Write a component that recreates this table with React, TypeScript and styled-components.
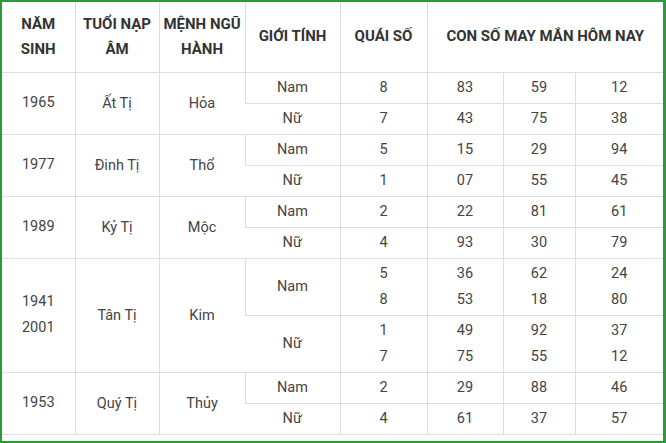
import React from "react";
import styled, { createGlobalStyle } from "styled-components";

const GlobalStyle = createGlobalStyle`
  html, body {
    margin: 0;
    padding: 0;
    background: #ffffff;
  }
  body {
    font-family: Roboto, "Noto Sans", "Liberation Sans", sans-serif;
  }
`;

type Gender = {
  label: string;
  quai: string[];
  nums: string[][];
  tall?: boolean;
};

type Row = {
  years: string[];
  tuoi: string;
  menh: string;
  genders: Gender[];
};

const rows: Row[] = [
  {
    years: ["1965"],
    tuoi: "Ất Tị",
    menh: "Hỏa",
    genders: [
      { label: "Nam", quai: ["8"], nums: [["83", "59", "12"]] },
      { label: "Nữ", quai: ["7"], nums: [["43", "75", "38"]] },
    ],
  },
  {
    years: ["1977"],
    tuoi: "Đinh Tị",
    menh: "Thổ",
    genders: [
      { label: "Nam", quai: ["5"], nums: [["15", "29", "94"]] },
      { label: "Nữ", quai: ["1"], nums: [["07", "55", "45"]] },
    ],
  },
  {
    years: ["1989"],
    tuoi: "Kỷ Tị",
    menh: "Mộc",
    genders: [
      { label: "Nam", quai: ["2"], nums: [["22", "81", "61"]] },
      { label: "Nữ", quai: ["4"], nums: [["93", "30", "79"]] },
    ],
  },
  {
    years: ["1941", "2001"],
    tuoi: "Tân Tị",
    menh: "Kim",
    genders: [
      {
        label: "Nam",
        quai: ["5", "8"],
        nums: [
          ["36", "53"],
          ["62", "18"],
          ["24", "80"],
        ],
        tall: true,
      },
      {
        label: "Nữ",
        quai: ["1", "7"],
        nums: [
          ["49", "75"],
          ["92", "55"],
          ["37", "12"],
        ],
        tall: true,
      },
    ],
  },
  {
    years: ["1953"],
    tuoi: "Quý Tị",
    menh: "Thủy",
    genders: [
      { label: "Nam", quai: ["2"], nums: [["29", "88", "46"]] },
      { label: "Nữ", quai: ["4"], nums: [["61", "37", "57"]] },
    ],
  },
];

// for the single-line rows nums is one row of three columns,
// for the tall rows it is three columns of two lines
const columnsOf = (g: Gender): string[][] =>
  g.tall ? g.nums : g.nums[0].map((n) => [n]);

const App: React.FC = () => {
  return (
    <>
      <GlobalStyle />
      <Frame>
        <Table>
          <colgroup>
            <col style={{ width: 73 }} />
            <col style={{ width: 84 }} />
            <col style={{ width: 86 }} />
            <col style={{ width: 95 }} />
            <col style={{ width: 87 }} />
            <col style={{ width: 76 }} />
            <col style={{ width: 72 }} />
            <col />
          </colgroup>
          <thead>
            <HeadRow>
              <HeadCell>
                NĂM
                <br />
                SINH
              </HeadCell>
              <HeadCell>
                TUỔI NẠP
                <br />
                ÂM
              </HeadCell>
              <HeadCell>
                MỆNH NGŨ
                <br />
                HÀNH
              </HeadCell>
              <HeadCell>GIỚI TÍNH</HeadCell>
              <HeadCell>QUÁI SỐ</HeadCell>
              <HeadCell colSpan={3}>CON SỐ MAY MẮN HÔM NAY</HeadCell>
            </HeadRow>
          </thead>
          <tbody>
            {rows.map((r) =>
              r.genders.map((g, gi) => (
                <BodyRow key={r.tuoi + g.label} tall={!!g.tall}>
                  {gi === 0 && (
                    <>
                      <Cell rowSpan={2}>
                        {r.years.map((y) => (
                          <Line key={y}>{y}</Line>
                        ))}
                      </Cell>
                      <Cell rowSpan={2}>{r.tuoi}</Cell>
                      <Cell rowSpan={2}>{r.menh}</Cell>
                    </>
                  )}
                  <Cell>{g.label}</Cell>
                  <Cell>
                    {g.quai.map((q, i) => (
                      <Line key={i}>{q}</Line>
                    ))}
                  </Cell>
                  {columnsOf(g).map((col, ci) => (
                    <Cell key={ci}>
                      {col.map((n, i) => (
                        <Line key={i}>{n}</Line>
                      ))}
                    </Cell>
                  ))}
                </BodyRow>
              ))
            )}
          </tbody>
        </Table>
      </Frame>
    </>
  );
};

export default App;

const Frame = styled.div`
  box-sizing: border-box;
  width: 666px;
  height: 443px;
  border: 2px solid #2b9a3b;
  border-right-width: 3px;
  background: #ffffff;
  padding-bottom: 6px;
`;

const Table = styled.table`
  width: 661px;
  border-collapse: collapse;
  table-layout: fixed;
  color: #444444;
  font-size: 14.5px;
`;

const HeadRow = styled.tr`
  height: 70px;
`;

const HeadCell = styled.th`
  padding: 0 2px;
  font-size: 15px;
  font-weight: 700;
  color: #333333;
  line-height: 25px;
  text-align: center;
  vertical-align: middle;
  border-left: 1px solid #dddddd;
  border-bottom: 1px solid #dddddd;

  &:first-child {
    border-left: none;
  }
`;

const BodyRow = styled.tr<{ tall: boolean }>`
  height: ${({ tall }) => (tall ? "57px" : "31px")};
`;

const Cell = styled.td`
  padding: 0;
  text-align: center;
  vertical-align: middle;
  border-left: 1px solid #dddddd;
  border-bottom: 1px solid #dddddd;

  &:first-child {
    border-left: none;
  }
`;

const Line = styled.div`
  line-height: 26px;
`;
